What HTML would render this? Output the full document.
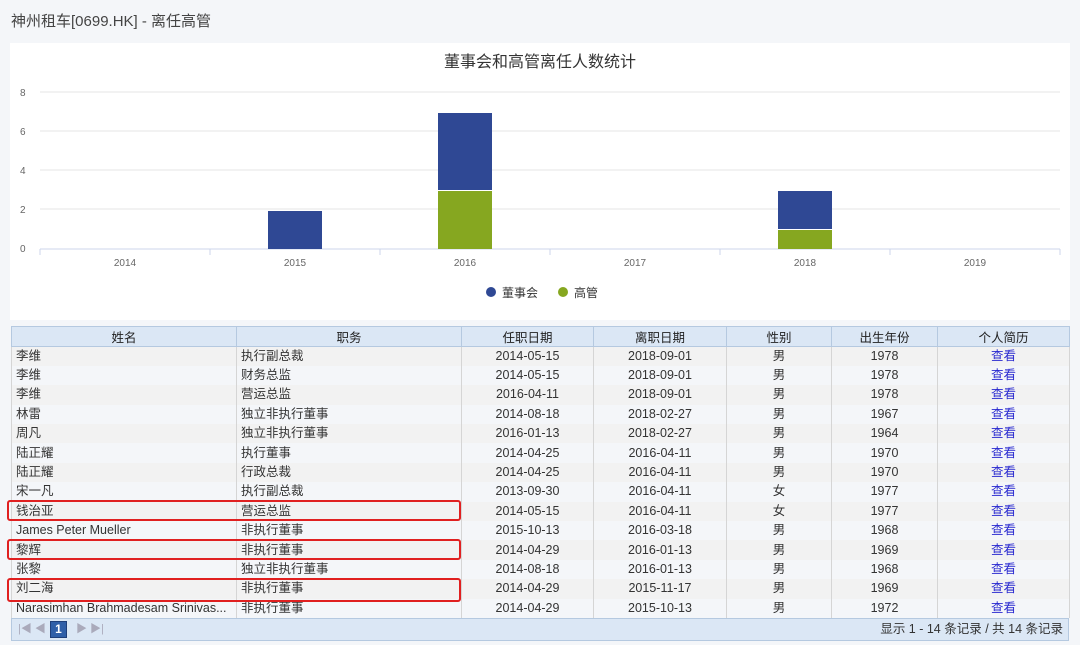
<!DOCTYPE html>
<html><head><meta charset="utf-8"><style>
body{margin:0;width:1080px;height:645px;background:#f4f6f9;font-family:"Liberation Sans","Noto Sans CJK SC",sans-serif;position:relative;overflow:hidden}
.t{position:absolute;left:11px;top:10px;font-size:15px;color:#444}
.panel{position:absolute;left:10px;top:43px;width:1060px;height:277px;background:#fff}
table{position:absolute;left:11px;top:326px;width:1058px;border-collapse:collapse;font-size:12.5px;color:#333;table-layout:fixed}
th{height:19px;background:#dbe7f5;font-weight:normal;color:#222;border:1px solid #b5c9e0;padding:0}
tr.r{height:19.4px}
td{padding:0 4px;border-left:1px solid #d5d5d5;border-right:1px solid #d5d5d5;white-space:nowrap;overflow:hidden;line-height:17px}
tr:nth-child(even) td{background:#f2f2f2}
td.c{text-align:center}
td a{color:#2a2ad0;text-decoration:none}
.pager{position:absolute;left:11px;top:618px;width:1058px;height:23px;background:#dbe7f5;border:1px solid #b5c9e0;box-sizing:border-box;font-size:12.5px;color:#333}
.pager span{line-height:21px}
.box{position:absolute;border:2px solid #e02020;border-radius:3px;left:7px;width:450px}
</style></head><body>
<div class="t">神州租车[0699.HK] - 离任高管</div>
<div class="panel"></div>
<svg style="position:absolute;left:0;top:0" width="1080" height="320" font-family="Liberation Sans,Noto Sans CJK SC,sans-serif">
<text x="540" y="67" text-anchor="middle" font-size="16" fill="#333">董事会和高管离任人数统计</text>
<g stroke="#e6e6e6"><line x1="40" x2="1060" y1="92" y2="92"/><line x1="40" x2="1060" y1="131" y2="131"/><line x1="40" x2="1060" y1="170" y2="170"/><line x1="40" x2="1060" y1="209" y2="209"/></g>
<line x1="40" x2="1060" y1="249" y2="249" stroke="#ccd6eb"/>
<g stroke="#ccd6eb"><line x1="40" x2="40" y1="249" y2="255"/><line x1="210" x2="210" y1="249" y2="255"/><line x1="380" x2="380" y1="249" y2="255"/><line x1="550" x2="550" y1="249" y2="255"/><line x1="720" x2="720" y1="249" y2="255"/><line x1="890" x2="890" y1="249" y2="255"/><line x1="1060" x2="1060" y1="249" y2="255"/></g>
<g font-size="10" fill="#666"><text x="20" y="96">8</text><text x="20" y="135">6</text><text x="20" y="174">4</text><text x="20" y="213">2</text><text x="20" y="252">0</text></g>
<g font-size="10" fill="#666" text-anchor="middle"><text x="125" y="266">2014</text><text x="295" y="266">2015</text><text x="465" y="266">2016</text><text x="635" y="266">2017</text><text x="805" y="266">2018</text><text x="975" y="266">2019</text></g>
<rect x="268" y="211" width="54" height="38" fill="#2f4894"/>
<rect x="438" y="113" width="54" height="77" fill="#2f4894"/>
<rect x="438" y="191" width="54" height="58" fill="#86a720"/>
<rect x="778" y="191" width="54" height="38" fill="#2f4894"/>
<rect x="778" y="230" width="54" height="19" fill="#86a720"/>
<circle cx="491" cy="292" r="5" fill="#2f4894"/><text x="502" y="297" font-size="12" fill="#333">董事会</text>
<circle cx="563" cy="292" r="5" fill="#86a720"/><text x="574" y="297" font-size="12" fill="#333">高管</text>
</svg>
<table>
<colgroup><col style="width:225px"><col style="width:225px"><col style="width:132px"><col style="width:133px"><col style="width:105px"><col style="width:106px"><col style="width:132px"></colgroup>
<tr><th>姓名</th><th>职务</th><th>任职日期</th><th>离职日期</th><th>性别</th><th>出生年份</th><th>个人简历</th></tr>
<tr class="r"><td>李维</td><td>执行副总裁</td><td class="c">2014-05-15</td><td class="c">2018-09-01</td><td class="c">男</td><td class="c">1978</td><td class="c"><a>查看</a></td></tr>
<tr class="r"><td>李维</td><td>财务总监</td><td class="c">2014-05-15</td><td class="c">2018-09-01</td><td class="c">男</td><td class="c">1978</td><td class="c"><a>查看</a></td></tr>
<tr class="r"><td>李维</td><td>营运总监</td><td class="c">2016-04-11</td><td class="c">2018-09-01</td><td class="c">男</td><td class="c">1978</td><td class="c"><a>查看</a></td></tr>
<tr class="r"><td>林雷</td><td>独立非执行董事</td><td class="c">2014-08-18</td><td class="c">2018-02-27</td><td class="c">男</td><td class="c">1967</td><td class="c"><a>查看</a></td></tr>
<tr class="r"><td>周凡</td><td>独立非执行董事</td><td class="c">2016-01-13</td><td class="c">2018-02-27</td><td class="c">男</td><td class="c">1964</td><td class="c"><a>查看</a></td></tr>
<tr class="r"><td>陆正耀</td><td>执行董事</td><td class="c">2014-04-25</td><td class="c">2016-04-11</td><td class="c">男</td><td class="c">1970</td><td class="c"><a>查看</a></td></tr>
<tr class="r"><td>陆正耀</td><td>行政总裁</td><td class="c">2014-04-25</td><td class="c">2016-04-11</td><td class="c">男</td><td class="c">1970</td><td class="c"><a>查看</a></td></tr>
<tr class="r"><td>宋一凡</td><td>执行副总裁</td><td class="c">2013-09-30</td><td class="c">2016-04-11</td><td class="c">女</td><td class="c">1977</td><td class="c"><a>查看</a></td></tr>
<tr class="r"><td>钱治亚</td><td>营运总监</td><td class="c">2014-05-15</td><td class="c">2016-04-11</td><td class="c">女</td><td class="c">1977</td><td class="c"><a>查看</a></td></tr>
<tr class="r"><td>James Peter Mueller</td><td>非执行董事</td><td class="c">2015-10-13</td><td class="c">2016-03-18</td><td class="c">男</td><td class="c">1968</td><td class="c"><a>查看</a></td></tr>
<tr class="r"><td>黎辉</td><td>非执行董事</td><td class="c">2014-04-29</td><td class="c">2016-01-13</td><td class="c">男</td><td class="c">1969</td><td class="c"><a>查看</a></td></tr>
<tr class="r"><td>张黎</td><td>独立非执行董事</td><td class="c">2014-08-18</td><td class="c">2016-01-13</td><td class="c">男</td><td class="c">1968</td><td class="c"><a>查看</a></td></tr>
<tr class="r"><td>刘二海</td><td>非执行董事</td><td class="c">2014-04-29</td><td class="c">2015-11-17</td><td class="c">男</td><td class="c">1969</td><td class="c"><a>查看</a></td></tr>
<tr class="r"><td>Narasimhan Brahmadesam Srinivas...</td><td>非执行董事</td><td class="c">2014-04-29</td><td class="c">2015-10-13</td><td class="c">男</td><td class="c">1972</td><td class="c"><a>查看</a></td></tr>
</table>
<div class="pager">
<span style="position:absolute;left:6px;top:0;color:#aab;font-size:11px">|◀ ◀</span>
<span style="position:absolute;left:38px;top:2px;width:17px;height:17px;background:#2f5fa8;color:#fff;text-align:center;font-weight:bold;line-height:15px;font-size:12px;border:1px solid #1e3f7a;box-sizing:border-box">1</span>
<span style="position:absolute;left:64px;top:0;color:#aab;font-size:11px">▶ ▶|</span>
<span style="position:absolute;right:5px;top:0">显示 1 - 14 条记录 / 共 14 条记录</span>
</div>
<div class="box" style="top:500px;height:17px"></div>
<div class="box" style="top:539px;height:17px"></div>
<div class="box" style="top:578px;height:20px"></div>
</body></html>
